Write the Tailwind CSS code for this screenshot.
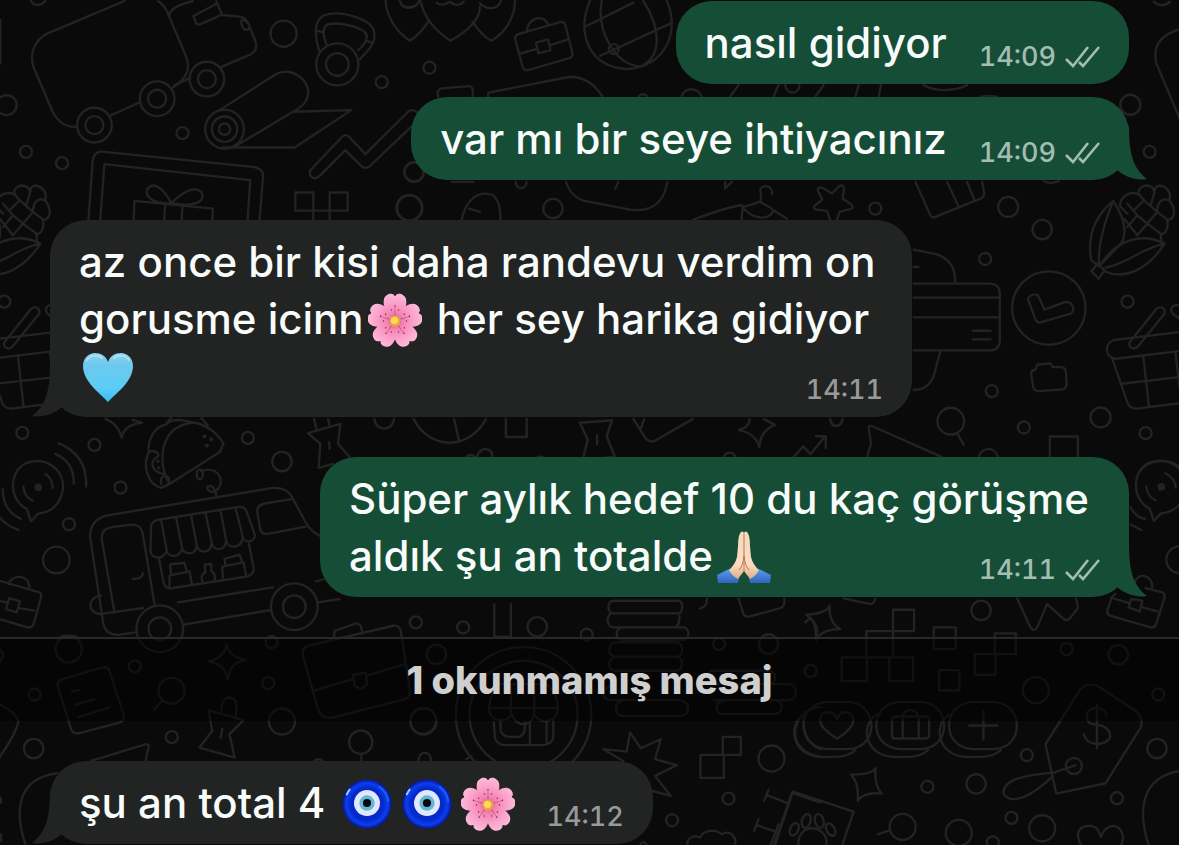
<!DOCTYPE html>
<html lang="tr">
<head>
<meta charset="utf-8">
<meta name="viewport" content="width=device-width, initial-scale=1">
<title>Sohbet</title>
<script src="https://cdn.jsdelivr.net/npm/@tailwindcss/browser@4"></script>
</head>
<body class="bg-[#0a0a0a]">

<!-- Shared symbols -->
<svg class="absolute w-0 h-0" aria-hidden="true">
  <defs>
    <radialGradient id="petal" gradientUnits="userSpaceOnUse" cx="27" cy="28" r="27">
      <stop offset="0" stop-color="#e0457f"/><stop offset=".3" stop-color="#f283b2"/><stop offset=".7" stop-color="#fba3cb"/><stop offset="1" stop-color="#fdb9d8"/>
    </radialGradient>
    <linearGradient id="heartFill" x1="0" y1="0" x2="0" y2="1">
      <stop offset="0" stop-color="#8fd3ee"/><stop offset=".25" stop-color="#6cc9ee"/><stop offset=".7" stop-color="#5ccdf6"/><stop offset="1" stop-color="#35bff3"/>
    </linearGradient>
    <radialGradient id="bead" cx=".5" cy=".5" r=".5">
      <stop offset="0" stop-color="#0a2fd0"/><stop offset=".65" stop-color="#0428cc"/><stop offset=".85" stop-color="#0a40ea"/><stop offset="1" stop-color="#06129c"/>
    </radialGradient>
    <linearGradient id="sleeve" x1="0" y1="0" x2="0" y2="1">
      <stop offset="0" stop-color="#5b9be8"/><stop offset="1" stop-color="#2c66bd"/>
    </linearGradient>
    <linearGradient id="skin" x1="0" y1="0" x2="0" y2="1">
      <stop offset="0" stop-color="#f7d9bd"/><stop offset=".7" stop-color="#f9dcc2"/><stop offset="1" stop-color="#e2ab85"/>
    </linearGradient>
    <symbol id="blossom" viewBox="0 0 54 54">
      <g fill="url(#petal)">
        <path id="p" d="M27 28C20 22 14 14 16 6 17 2 22 0 24 1 26 1 26 3 27 3 28 3 28 1 30 1 32 0 37 2 38 6 40 14 34 22 27 28Z"/>
        <use href="#p" transform="rotate(72 27 28)"/><use href="#p" transform="rotate(144 27 28)"/>
        <use href="#p" transform="rotate(216 27 28)"/><use href="#p" transform="rotate(288 27 28)"/>
      </g>
      <g id="s" fill="#8d1f4f"><circle cx="27" cy="13" r=".8"/><circle cx="23.500" cy="17" r=".7"/><circle cx="30.500" cy="17" r=".7"/><path d="M26.700 14h.6l.3 8h-1.200z" opacity=".4"/></g>
      <use href="#s" transform="rotate(72 27 28)"/><use href="#s" transform="rotate(144 27 28)"/>
      <use href="#s" transform="rotate(216 27 28)"/><use href="#s" transform="rotate(288 27 28)"/>
      <circle cx="27" cy="28" r="5.500" fill="#e9a63f"/><circle cx="26.500" cy="27.500" r="3.600" fill="#ffd95e"/>
    </symbol>
    <symbol id="heart" viewBox="0 0 54 54">
      <path fill="url(#heartFill)" d="M27 52C20 44 2 32 2 16 2 8 8 3 14 3 20 3 25 6 27 12 29 6 34 3 40 3 46 3 52 8 52 16 52 32 34 44 27 52Z"/>
      <path d="M6 10C9 5 17 4 21 8M33 8C37 4 45 5 48 10" fill="none" stroke="#c5ecfa" stroke-width="2" stroke-linecap="round" opacity=".6"/>
    </symbol>
    <symbol id="nazar" viewBox="0 0 54 54">
      <circle cx="27" cy="26" r="25.500" fill="url(#bead)"/>
      <path d="M6 16A23 23 0 0 1 9 11" stroke="#a9cbff" stroke-width="2" stroke-linecap="round" fill="none"/>
      <path d="M40 8A22 22 0 0 1 49 23" stroke="#1f6bff" stroke-width="2" stroke-linecap="round" fill="none" opacity=".8"/>
      <circle cx="27" cy="25" r="13.500" fill="#dfe9fb"/><circle cx="27" cy="25" r="8" fill="#63b7d4"/><circle cx="27" cy="25" r="4.200" fill="#05070c"/>
    </symbol>
    <symbol id="pray" viewBox="0 0 54 54">
      <path fill="url(#sleeve)" d="M0 45 12 39Q16 45 22 48L21 53H1ZM54 45 42 39Q38 45 32 48L33 53H53Z"/>
      <path fill="url(#skin)" d="M24 2Q27 0 27 5V41L21 49Q15 46 12 40 18 35 20 27L21 16Q21 5 24 2ZM30 2Q27 0 27 5V41L33 49Q39 46 42 40 36 35 34 27L33 16Q33 5 30 2Z"/>
      <path d="M27 4V41M27 26Q26 36 22 40M27 26Q28 36 32 40" stroke="#b9774f" stroke-width="1" fill="none"/>
    </symbol>
    <symbol id="ticks" viewBox="0 0 36 26">
      <path d="M2 15 9 22 24 3M15 18 19 22 35 3" fill="none" stroke="currentColor" stroke-width="2.600"/>
    </symbol>
    <symbol id="tail" viewBox="0 0 30 54">
      <path fill="currentColor" d="M0 0H12C12 28 16 42 30 53 20 55 8 51 0 44Z"/>
    </symbol>
    <g id="corn">
      <path d="M758 62C700 110 680 170 692 240L716 258C710 200 730 130 758 62C790 110 800 150 785 185L716 258M716 258C760 190 830 150 912 190C860 270 790 300 730 272M735 262C800 250 850 200 912 190M712 250 732 270 714 295 692 272Z"/>
      <path d="M778 78C780 40 820 30 838 46C820 20 870 0 882 34C880 0 940 20 926 60C950 90 940 120 920 118C925 150 910 165 900 160L902 182M790 115 830 165 860 130 900 160M778 78 800 100M800 70 830 105 800 140M830 105 860 130 890 95 850 60 820 90M838 46 850 60M882 34 870 75M926 60C900 50 890 70 890 95L920 118"/>
    </g>
    <g id="basket">
      <path d="M957 455 765 478C730 485 730 530 765 535L957 512M755 535 800 665Q808 688 835 684L957 668M785 610 957 590M848 528 865 680M944 515 957 620M808 485 885 388C900 370 922 390 908 405L833 497C820 512 800 500 808 485ZM957 375C930 370 925 390 940 403L957 415"/>
    </g>
    <g id="case">
      <path d="M355 102 480 66Q492 64 496 75L517 157Q520 170 508 174L385 210Q372 213 368 200L346 118Q344 106 355 102ZM382 92C378 60 430 35 446 76M362 160 408 147M452 135 505 118M408 128 444 118 452 150 416 160Z"/>
    </g>
  </defs>
</svg>

<main class="relative isolate flex min-h-screen flex-col overflow-hidden px-[50px] pt-px font-['Inter','Noto_Sans',sans-serif] text-[42px]/[57px] font-medium text-[#f7fbf9]">

  <!-- Wallpaper doodles -->
  <svg class="absolute inset-0 -z-10 h-full w-full" viewBox="0 0 1179 845" preserveAspectRatio="xMidYMid slice" fill="none" stroke="#232324" stroke-width="7" stroke-linejoin="round" stroke-linecap="round" aria-hidden="true">
    <g transform="scale(.3333)">
      <path d="M375 3 145 100C105 120 90 160 102 200L160 335C175 365 200 382 232 380M332 347 418 308M475 3Q495 15 505 40L560 170C575 210 560 235 520 262M510 45C510 25 550 10 580 3M525 255 570 235M650 3 668 45 720 50Q740 52 748 75L768 125Q775 150 755 162L662 202M582 48 650 12M582 48 590 70Q595 76 605 72L662 46M725 62C725 90 745 95 748 85M725 62Q735 55 743 68M95 3C105 20 125 18 138 3M3 60V190"/>
      <circle cx="285" cy="375" r="52"/><circle cx="285" cy="375" r="27"/><circle cx="473" cy="296" r="52"/><circle cx="473" cy="296" r="27"/><circle cx="622" cy="237" r="52"/><circle cx="622" cy="237" r="27"/>
      <circle cx="852" cy="101" r="39"/><circle cx="1013" cy="193" r="63"/><circle cx="1013" cy="193" r="34"/><circle cx="1146" cy="246" r="18"/><circle cx="549" cy="399" r="18"/><circle cx="80" cy="455" r="18"/><circle cx="188" cy="489" r="18"/><circle cx="22" cy="315" r="30"/><circle cx="1243" cy="515" r="29"/><circle cx="1228" cy="623" r="38"/>
      <path d="M960 155C945 110 940 60 975 45C1020 30 1120 55 1124 100C1128 135 1100 155 1080 178M982 137C970 110 965 75 990 72C1030 65 1095 85 1101 105C1103 125 1090 138 1075 150M950 92 968 96M1101 122 1118 130"/>
      <circle cx="675" cy="387" r="58"/><circle cx="675" cy="387" r="38"/><circle cx="675" cy="387" r="17"/>
      <path d="M660 330 830 222C880 195 945 250 920 300Q912 318 880 335L705 440M880 335 1055 330 885 442H670"/>
      <path d="M932 510 1025 412Q1038 398 1050 412L1097 462 1225 335Q1238 325 1250 335L1260 345M1250 365 1110 498Q1097 508 1085 498L1037 450 960 527C945 542 925 530 932 510"/>
      <path d="M265 690 280 480Q285 450 315 455L760 500Q795 505 790 535L775 720M300 690 315 492 752 540 740 720M400 720 405 602 640 625 635 720M490 720 497 612M543 720 549 616M515 608C480 615 430 595 445 565C465 540 495 570 515 608C535 590 580 550 605 575C625 615 560 618 515 608"/>
      <path d="M887 577H941V631H887ZM990 577H1044V631H990ZM941 631H990M941 631V740M990 631V740"/>
      <path d="M1158 3C1160 50 1190 95 1230 122 1250 110 1275 85 1288 60M1200 3C1210 30 1245 30 1258 3"/>
    </g>
    <g transform="translate(-263 180) scale(.3333)"><use href="#corn"/></g>
    <g transform="translate(400 0) scale(.3333)">
      <path d="M62 3C75 60 110 95 152 122C200 95 240 60 240 20M345 3C345 50 320 95 275 122 250 110 235 90 218 65M110 8C125 20 140 12 150 5 165 20 185 15 192 5M240 10C260 30 295 30 303 3M5 15Q20 30 50 15"/>
      <use href="#case"/>
      <circle cx="89" cy="203" r="18"/><circle cx="43" cy="516" r="29"/><circle cx="30" cy="623" r="38"/><circle cx="459" cy="625" r="29"/>
      <path d="M570 3C530 90 560 200 680 207C800 200 840 90 800 3M605 3C590 90 640 190 720 200C790 170 780 80 730 3M560 78 700 8M600 168 812 70"/><circle cx="641" cy="147" r="15"/>
      <path d="M115 290Q110 268 125 265L210 258Q222 262 218 290M265 290V278L510 230Q570 230 608 290M845 290C850 260 895 260 905 290M715 290C722 280 735 280 742 290M990 290 1015 255M1120 290 1135 255M1155 255C1160 285 1195 285 1198 255M155 545H220M347 545C350 570 378 570 380 545M498 545C510 580 530 600 570 605L690 628C740 635 790 620 802 545M655 545 646 565M975 545V565L995 545"/>
      <path d="M185 660C200 590 240 570 280 585C305 610 300 640 302 660M208 625 240 635M880 658C930 640 980 620 1025 615M1028 620C1020 660 1030 700 1030 700M1120 630 1160 655M1028 622C1060 660 1110 660 1118 632M1030 620 1080 605Q1085 590 1080 570C1085 550 1120 555 1115 582M1080 605 1115 625"/>
    </g>
    <g transform="translate(800 0) scale(.3333)">
      <path d="M45 290 70 255M165 290 175 255M235 290 242 255M370 255C400 275 460 275 500 255M1137 88C1080 105 1055 140 1067 190L1137 355M1060 5C1075 20 1095 18 1108 5M345 545 390 645Q395 655 405 650L540 595Q555 590 550 570L545 545M440 545 475 620M500 545 522 600M540 290Q565 285 590 290M730 543Q750 553 775 543"/>
      <path d="M95 580 118 557Q130 553 131 565L127 595 152 612Q162 622 150 627L118 635 108 665M95 580 65 562Q50 560 53 572L66 598 45 615Q36 625 48 628L80 632 92 665"/>
      <circle cx="989" cy="314" r="30"/><circle cx="1047" cy="455" r="18"/><circle cx="225" cy="625" r="18"/><circle cx="623" cy="620" r="30"/>
    </g>
    <g transform="translate(860 180) scale(.3333)">
      <circle cx="545" cy="148" r="29"/><circle cx="374" cy="236" r="18"/><circle cx="565" cy="383" r="110"/><circle cx="801" cy="364" r="18"/><circle cx="394" cy="632" r="18"/><circle cx="490" cy="741" r="18"/><circle cx="720" cy="711" r="30"/><circle cx="855" cy="758" r="18"/><circle cx="271" cy="722" r="40"/>
      <path d="M290 758 310 793M160 208 230 222Q290 245 283 310M160 310H390Q418 312 418 340V480Q418 508 390 510H160M160 352H418M160 411H418M337 451H390M337 477H390M240 512 222 580Q205 630 160 628M160 260H175M503 358C500 345 530 335 535 350L552 388 610 366C640 360 645 395 630 400L540 426Q530 428 525 418ZM512 580Q512 568 525 568L530 553 570 549 577 560 600 560Q615 560 616 575L618 610Q618 625 605 627L535 632Q520 632 518 620ZM20 830 32 790 25 742Q28 733 38 738L245 830M355 830C360 800 405 795 412 830M568 830V768H652V830M840 870C860 840 920 830 957 860"/>
      <use href="#corn"/><use href="#basket"/>
    </g>
    <g transform="translate(-264 180) scale(.3333)"><use href="#basket"/><path d="M957 455 1000 452M957 512 1010 508M957 590 1010 585M957 668 980 664"/><circle cx="807" cy="364" r="18"/></g>
    <g transform="translate(0 400) scale(.3333)">
      <circle cx="69" cy="97" r="18"/><circle cx="285" cy="133" r="18"/><circle cx="363" cy="261" r="18"/><circle cx="209" cy="371" r="18"/><circle cx="171" cy="478" r="40"/><circle cx="745" cy="112" r="18"/><circle cx="847" cy="183" r="29"/><circle cx="117" cy="260" r="8" fill="#232324"/>
      <path d="M82 325C30 300 25 215 80 188C140 165 200 210 190 270C180 320 150 335 115 340L95 362ZM138 220Q160 235 160 262M72 258Q75 290 100 300M168 160Q225 185 223 250M178 128Q265 165 260 258M10 265Q10 330 65 355M0 350Q20 375 58 388"/>
      <path d="M318 55C345 65 360 85 367 112C372 85 390 72 427 66L400 58M485 262C440 250 430 190 448 155C445 120 460 80 500 72 520 50 560 60 580 66C620 70 655 100 672 130L660 155 510 250ZM510 250C480 200 480 130 520 90 540 75 560 68 580 66M448 155C470 145 490 165 465 175 450 195 465 215 490 220M485 250C480 225 505 215 510 240M592 220C590 200 612 205 610 225 605 245 590 235 592 220M605 212C650 195 680 235 655 265 640 285 615 265 625 258 640 250 650 270 650 285M500 70 515 52M605 52 625 75"/>
      <g fill="#232324" stroke="none"><circle cx="615" cy="108" r="6"/><circle cx="635" cy="116" r="6"/><circle cx="622" cy="135" r="6"/><circle cx="475" cy="182" r="5"/><circle cx="478" cy="202" r="5"/></g>
      <path d="M960 405Q930 390 918 365L880 295Q865 260 820 262L320 345Q270 360 272 410L312 670Q320 705 360 702L410 695M552 672 812 628M955 605 1020 595M300 640 430 622M535 605 820 560M950 542 975 535M345 635 307 415Q305 385 335 380L395 372Q425 370 430 400L465 610M400 535Q430 535 430 518M305 585C260 590 265 640 305 640"/>
      <circle cx="481" cy="684" r="70"/><circle cx="481" cy="684" r="34"/><circle cx="884" cy="618" r="70"/><circle cx="884" cy="618" r="34"/>
      <path d="M880 295 800 308Q770 312 773 335L782 385Q785 402 805 400L918 378M455 375Q460 360 475 358L710 320Q735 315 742 335L765 400C770 425 735 430 730 410 725 445 685 445 680 420 675 455 640 450 637 428 630 465 595 455 592 435 585 470 550 460 548 442 540 475 505 470 502 450 490 480 455 475 453 450ZM485 360 502 450M530 352 548 442M575 345 592 435M618 337 637 428M663 330 680 420M708 322 730 410M478 470 492 545Q498 568 520 562L740 528Q765 522 762 500L748 430M510 560V525L570 512 577 550M515 520 512 495Q512 490 520 490L555 487 562 512M610 545Q600 525 618 515L615 492 635 490 636 512Q650 520 645 538M670 532 668 498 732 485 740 528M678 495 675 475 720 462 728 485"/>
      <path d="M925 98 1022 70 1015 130 1050 170M925 98 962 130 957 202 1000 190M943 55 950 85M985 55 990 75M988 125 990 145"/>
      <path d="M0 540 120 575Q128 580 125 590L103 670Q98 682 85 680L0 655M28 550C35 520 90 520 90 560M0 600 22 605M60 622 105 630M30 592 62 602 52 635 20 625ZM175 718C180 700 235 700 240 718"/>
    </g>
    <g transform="translate(330 400) scale(.357)">
      <path d="M125 52C130 88 175 88 180 52M235 52C280 140 390 140 437 52M348 52 362 112M493 52V102H551V52M700 62 790 55 775 100 798 158 708 166 722 110ZM748 98V122M850 52 885 108Q900 120 915 110L1015 52M880 52 870 80M1145 83C1165 78 1175 65 1175 52M1145 83C1180 90 1195 105 1202 130 1205 100 1215 82 1245 68L1215 52M1400 52C1405 78 1430 78 1435 52M1292 165 1325 128 1345 150 1385 102M1360 100H1388V132M372 170C385 150 400 145 412 165C440 190 470 150 445 138C425 130 410 150 412 165M575 170C580 153 600 153 607 170"/><circle cx="1119" cy="163" r="17"/>
    </g>
    <g transform="translate(700 450) scale(.3333)">
      <circle cx="1382" cy="109" r="8" fill="#232324"/><circle cx="842" cy="479" r="29"/><circle cx="1437" cy="327" r="40"/><circle cx="205" cy="580" r="29"/><circle cx="57" cy="580" r="18"/>
      <path d="M1347 174C1295 149 1290 64 1345 37C1405 14 1465 59 1455 119C1445 169 1415 184 1380 189L1360 211ZM1395 69Q1425 84 1425 111M1337 107Q1340 139 1365 149M1290 170Q1305 200 1333 205M1290 222 1322 238M115 443 130 490Q135 500 150 497L240 472Q255 468 252 443M430 443 510 460Q522 460 525 443M0 473Q22 468 20 443M950 443 990 530Q1000 545 1010 530L1040 460 1090 505Q1100 512 1108 503L1130 475Q1135 465 1125 443"/>
      <path d="M318 492C350 490 380 485 388 465 385 500 400 525 420 535 390 535 365 540 350 563 355 530 345 510 318 492Z"/>
      <path d="M1245 430Q1235 435 1232 445L1220 480Q1218 490 1228 495L1350 530Q1362 532 1366 522L1392 440Q1394 430 1385 425L1335 412M1302 395C1310 365 1355 370 1355 410M1230 440 1285 457M1325 470 1370 482M1292 445 1325 450 1318 482 1284 470Z"/>
    </g>
    <g transform="translate(0 620) scale(.3333)">
      <circle cx="208" cy="86" r="39"/><circle cx="406" cy="137" r="18"/><circle cx="106" cy="221" r="18"/><circle cx="806" cy="187" r="18"/><circle cx="816" cy="64" r="18"/><circle cx="517" cy="349" r="18"/><circle cx="103" cy="383" r="29"/><circle cx="847" cy="302" r="39"/><circle cx="516" cy="210" r="39"/><circle cx="1083" cy="364" r="35"/><circle cx="1270" cy="300" r="39"/>
      <path d="M487 240 463 268M1085 400V420M190 175 310 140Q325 137 330 150L372 280Q377 300 360 305L240 337Q220 340 215 325L175 195Q173 180 190 175M218 212 238 208M228 252 285 235M237 289 330 260M627 122C660 115 680 95 680 68C685 95 700 110 737 117C700 125 690 145 684 175C680 145 665 130 627 122ZM665 272C665 250 672 230 690 230C715 232 712 260 708 285M627 268 732 298 690 340 705 410 600 380 638 330ZM668 325 663 352M0 250Q50 275 57 300 55 330 0 410M275 420 440 370Q450 370 447 380L438 420M80 675C40 560 60 470 175 457M0 85Q15 95 10 110L0 125M5 530V545M5 640V660"/>
      <path d="M925 75 1180 15Q1198 12 1203 30L1230 205Q1232 230 1215 235L1000 290Q965 295 955 265L910 105Q905 82 925 75M940 210 1060 175M1100 165 1215 130M1060 162 1098 155 1102 190 1085 205 1065 195ZM1003 50 1005 30 1070 8Q1080 8 1085 20L1088 38M945 420Q955 410 970 420"/>
    </g>
    <g transform="translate(400 620) scale(.3333)">
      <circle cx="190" cy="20" r="18"/><circle cx="412" cy="18" r="29"/><circle cx="560" cy="42" r="18"/><circle cx="48" cy="5" r="18"/><circle cx="957" cy="70" r="18"/><circle cx="1105" cy="70" r="29"/><circle cx="110" cy="101" r="29"/><circle cx="1231" cy="150" r="18"/><circle cx="71" cy="302" r="39"/><circle cx="985" cy="533" r="18"/><circle cx="816" cy="598" r="18"/><circle cx="1114" cy="413" r="39"/>
      <circle cx="371" cy="282" r="203"/><circle cx="371" cy="282" r="162"/><path d="M56 420C58 388 92 388 94 420M283 -50V48H333V-50"/>
      <path d="M265 262H475M302 190Q265 220 268 270C270 300 320 310 335 280 350 320 395 320 403 280 420 315 475 305 473 262Q475 220 440 190ZM333 190V280M403 190V280M282 305 285 350Q290 372 315 373H430Q460 370 460 345V300M302 305V325Q305 348 330 348H355Q375 345 375 320V305M390 310V370M440 305V370"/>
      <path d="M640 -60H835C850 -60 850 -25 835 -22H640C620 -22 620 -60 640 -60M630 -20C615 0 625 18 640 20H820Q840 18 838 -15M665 20H850C870 22 870 55 850 58H665C645 55 645 25 665 20M645 65H830C852 68 852 105 830 108H645C622 105 622 70 645 65M645 110C622 115 622 145 645 150H830C850 145 850 115 835 110M630 195C605 205 605 235 630 238H840M665 240C645 245 640 280 665 285H845C870 282 870 245 845 240M950 190H1165C1195 192 1195 235 1165 238H940M965 240C945 245 945 275 965 280H1125C1150 275 1150 245 1130 240M930 150H1105C1130 152 1130 185 1110 188"/>
      <path d="M670 420 610 385 680 392 690 335 722 382 782 355 765 415 830 433 765 465 812 525 750 508M968 348H1022V402H968ZM901 402H971V471H901ZM1105 507 1092 540M1098 522 1158 545M1075 595 1062 630M1068 612 1128 632M1120 675 1175 515 1260 545M862 672C860 650 885 640 900 650 910 625 950 625 965 640 990 625 1010 650 1005 668M1260 258C1170 270 1150 390 1260 408M1215 275C1200 320 1220 370 1260 385M1215 5Q1245 -30 1248 60M200 415 215 405M720 672Q730 655 740 672"/>
    </g>
    <g transform="translate(780 590) scale(.3333)">
      <circle cx="92" cy="241" r="18"/><circle cx="858" cy="175" r="18"/><circle cx="1013" cy="192" r="29"/><circle cx="766" cy="298" r="39"/><circle cx="1133" cy="311" r="18"/><circle cx="1129" cy="473" r="29"/><circle cx="739" cy="493" r="18"/><circle cx="587" cy="579" r="29"/><circle cx="441" cy="588" r="18"/><circle cx="1009" cy="622" r="18"/><circle cx="693" cy="681" r="18"/><circle cx="785" cy="712" r="39"/><circle cx="535" cy="726" r="39"/><circle cx="367" cy="708" r="39"/><circle cx="637" cy="754" r="18"/>
      <path d="M328 718 292 730M338 57H401V121H338ZM258 121H338V200H258ZM184 200H260V271H184ZM327 200H398V270H327ZM460 110H526V175H460ZM643 128H706V190H643ZM583 190H645V252H583ZM476 238H537V299H476Z"/>
      <g id="pill"><path d="M145 333H200C295 333 300 475 200 475H145C45 475 45 333 145 333ZM72 370C20 400 35 495 120 498H160Q200 500 225 478"/></g>
      <use href="#pill" x="218"/><use href="#pill" x="436"/>
      <path d="M170 443C140 425 118 405 120 385C122 360 160 355 170 385C180 355 215 360 219 385C220 405 200 425 170 443ZM345 377H435Q446 377 446 388V433Q446 443 435 443H345Q335 443 335 433V388Q335 377 345 377M367 443V380Q370 358 390 358T415 380V443M609 362V446M567 404H650M212 551C240 550 275 550 286 532 282 565 290 595 305 608 275 605 245 610 232 630 235 600 230 570 212 551Z"/>
      <path d="M795 460 900 295Q920 275 950 285L1065 360Q1090 380 1080 410L975 577 827 608ZM978 372C970 345 920 345 918 375C920 400 935 400 950 402C980 405 992 425 988 440C978 465 920 470 910 430M949 343V472M885 523 820 545C760 550 660 560 670 610C700 650 770 600 815 558"/><circle cx="880" cy="525" r="24"/>
      <path d="M-30 765 -5 700M185 765 220 662 38 602 -15 760M55 765C50 730 75 712 95 712S145 730 138 765M1105 765C1070 660 1080 560 1197 540M902 765C880 720 900 705 925 705S955 720 961 738C970 715 985 705 1000 705 1025 710 1035 740 1020 765"/>
      <ellipse cx="42" cy="715" rx="12" ry="20" transform="rotate(25 42 715)"/><ellipse cx="78" cy="690" rx="13" ry="21" transform="rotate(15 78 690)"/><ellipse cx="117" cy="690" rx="13" ry="21" transform="rotate(-15 117 690)"/><ellipse cx="151" cy="716" rx="12" ry="20" transform="rotate(-30 151 716)"/>
    </g>
  </svg>

  <!-- Outgoing -->
  <article class="flex items-end gap-8 self-end rounded-[36px] bg-[#154d37] px-[29px] py-[13px]">
    <p>nasıl gidiyor</p>
    <div class="flex items-center gap-2 text-[27px]/7 text-[#a3bdb2] tabular-nums"><time>14:09</time><svg class="h-[26px] w-9" role="img" aria-label="İletildi"><use href="#ticks"/></svg></div>
  </article>

  <article class="relative mt-[13px] flex items-end gap-8 self-end rounded-[36px] bg-[#154d37] px-[29px] py-[13px]">
    <p>var mı bir seye ihtiyacınız</p>
    <div class="flex items-center gap-2 text-[27px]/7 text-[#a3bdb2] tabular-nums"><time>14:09</time><svg class="h-[26px] w-9" role="img" aria-label="İletildi"><use href="#ticks"/></svg></div>
    <svg class="absolute -right-[18px] bottom-0 h-[54px] w-[30px] text-[#154d37]" aria-hidden="true"><use href="#tail"/></svg>
  </article>

  <!-- Incoming -->
  <article class="relative mt-10 w-[862px] max-w-full self-start rounded-[36px] bg-[#222423] px-[29px] py-[13px]">
    <p>az once bir kisi daha randevu verdim on gorusme icinn<svg class="mx-1 -my-2 inline-block size-[54px] align-[-5px]" role="img" aria-label="Kiraz çiçeği"><use href="#blossom"/></svg> her sey harika gidiyor <svg class="mx-0.5 -my-2 inline-block size-[54px] align-[-5px]" role="img" aria-label="Açık mavi kalp"><use href="#heart"/></svg><time class="float-right mt-[29px] text-[27px]/7 text-[#989a99] tabular-nums">14:11</time></p>
    <svg class="absolute -left-[18px] bottom-0 h-[54px] w-[30px] -scale-x-100 text-[#222423]" aria-hidden="true"><use href="#tail"/></svg>
  </article>

  <!-- Outgoing -->
  <article class="relative mt-10 w-[809px] max-w-full self-end rounded-[36px] bg-[#154d37] px-[29px] py-[13px]">
    <p>Süper aylık hedef 10 du kaç görüşme aldık şu an totalde<svg class="mx-1 -my-2 inline-block size-[54px] align-[-5px]" role="img" aria-label="Dua eden eller"><use href="#pray"/></svg><span class="float-right mt-[29px] flex items-center gap-2 text-[27px]/7 text-[#a3bdb2] tabular-nums"><time>14:11</time><svg class="h-[26px] w-9" role="img" aria-label="İletildi"><use href="#ticks"/></svg></span></p>
    <svg class="absolute -right-[18px] bottom-0 h-[54px] w-[30px] text-[#154d37]" aria-hidden="true"><use href="#tail"/></svg>
  </article>

  <!-- Unread divider -->
  <h2 class="-mx-[50px] mt-10 border-t-2 border-[#292929] bg-black/50 py-3 text-center text-[38px]/[58px] font-extrabold text-[#cfcfcf]">1 okunmamış mesaj</h2>

  <!-- Incoming -->
  <article class="relative mt-10 mb-0.5 flex items-end gap-7 self-start rounded-[36px] bg-[#222423] px-[29px] py-[13px]">
    <p>şu an total 4 <svg class="mx-1 -my-2 inline-block size-[52px] align-[-5px]" role="img" aria-label="Nazar boncuğu"><use href="#nazar"/></svg><svg class="mx-1 -my-2 inline-block size-[52px] align-[-5px]" role="img" aria-label="Nazar boncuğu"><use href="#nazar"/></svg><svg class="mx-1 -my-2 inline-block size-[54px] align-[-5px]" role="img" aria-label="Kiraz çiçeği"><use href="#blossom"/></svg></p>
    <time class="text-[27px]/7 text-[#989a99] tabular-nums">14:12</time>
    <svg class="absolute -left-[18px] bottom-0 h-[54px] w-[30px] -scale-x-100 text-[#222423]" aria-hidden="true"><use href="#tail"/></svg>
  </article>
</main>
</body>
</html>
